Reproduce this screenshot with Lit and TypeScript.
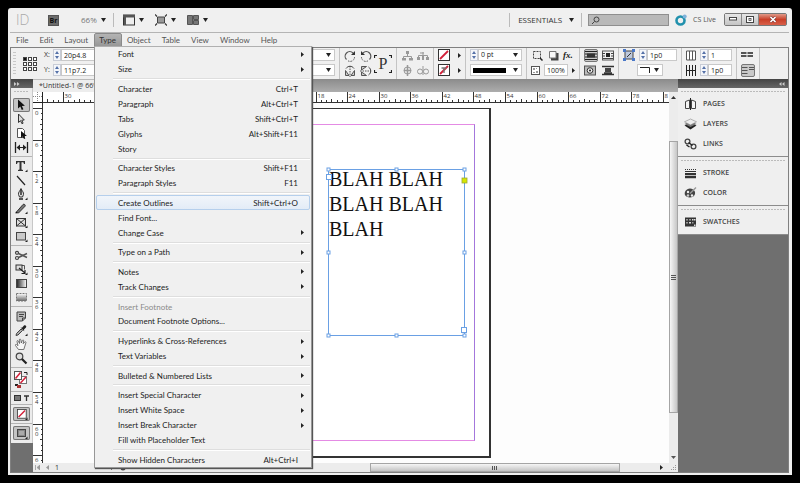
import { LitElement, html, svg, css, nothing, TemplateResult } from "lit";
import { customElement, property, state } from "lit/decorators.js";
import { classMap } from "lit/directives/class-map.js";

const icon = (w: number, h: number, body: unknown) =>
  html`<svg width=${w} height=${h} viewBox="0 0 ${w} ${h}" aria-hidden="true">${body}</svg>`;

const down = icon(5, 4, svg`<path d="M0 0h5L2.500 4z" fill="#222"/>`);
const right = icon(3, 5, svg`<path d="M0 0L3 2.500L0 5z" fill="#222"/>`);
const corner = svg`<path d="M14.500 10.500v2.500H12z" fill="#222"/>`;
const swatch = svg`<rect x=".5" y=".5" width="11" height="11" fill="#fff" stroke="#333"/><path d="M2 10L10 2" stroke="#d3203a" stroke-width="1.800"/>`;

type Entry = { label: string; key?: string; sub?: boolean; off?: boolean; hot?: boolean } | null;

const MENU: Entry[] = [
  { label: "Font", sub: true },
  { label: "Size", sub: true },
  null,
  { label: "Character", key: "Ctrl+T" },
  { label: "Paragraph", key: "Alt+Ctrl+T" },
  { label: "Tabs", key: "Shift+Ctrl+T" },
  { label: "Glyphs", key: "Alt+Shift+F11" },
  { label: "Story" },
  null,
  { label: "Character Styles", key: "Shift+F11" },
  { label: "Paragraph Styles", key: "F11" },
  null,
  { label: "Create Outlines", key: "Shift+Ctrl+O", hot: true },
  { label: "Find Font..." },
  { label: "Change Case", sub: true },
  null,
  { label: "Type on a Path", sub: true },
  null,
  { label: "Notes", sub: true },
  { label: "Track Changes", sub: true },
  null,
  { label: "Insert Footnote", off: true },
  { label: "Document Footnote Options..." },
  null,
  { label: "Hyperlinks & Cross-References", sub: true },
  { label: "Text Variables", sub: true },
  null,
  { label: "Bulleted & Numbered Lists", sub: true },
  null,
  { label: "Insert Special Character", sub: true },
  { label: "Insert White Space", sub: true },
  { label: "Insert Break Character", sub: true },
  { label: "Fill with Placeholder Text" },
  null,
  { label: "Show Hidden Characters", key: "Alt+Ctrl+I" },
];

const base = css`
  * { box-sizing: border-box; }
  button, input, select {
    font: inherit; color: inherit; margin: 0; padding: 0; border: 0;
    background: none; border-radius: 0; appearance: none; outline: 0; min-width: 0;
  }
  svg { display: block; flex: none; }
`;

@customElement("type-menu")
export class TypeMenu extends LitElement {
  static styles = [base, css`
    :host {
      display: flex; flex-direction: column; background: #f0f0f0;
      border: 1px solid #979797; border-top-color: #b0b0b0;
      box-shadow: 1px 1px 1px #555; color: #1c1c1c; box-sizing: border-box;
      font: 8px/10px Lato, "Open Sans", sans-serif;
    }
    .row {
      flex: 14 1 0px; min-height: 0; display: flex; align-items: center;
      margin: 0 1px; padding: 0 5px 0 21px; line-height: 10px; text-align: left;
      border: 1px solid transparent; border-radius: 2px;
    }
    .label { flex: 1; }
    .key { padding-right: 6px; }
    .hot { background: linear-gradient(#f1f5fa, #e3ecf7); border-color: #b5cfec; }
    .off { color: #8a8a8a; }
    .sep { flex: 5 1 0px; min-height: 0; display: flex; align-items: center; margin: 0 1px 0 18px; }
    .sep::after { content: ""; flex: 1; border-top: 1px solid #dedede; border-bottom: 1px solid #fff; }
  `];
  render() {
    return MENU.map((e) => e === null
      ? html`<div class="sep" role="separator"></div>`
      : html`<button role="menuitem" class=${classMap({ row: true, hot: !!e.hot, off: !!e.off })} ?disabled=${!!e.off}>
          <span class="label">${e.label}</span>
          ${e.key ? html`<span class="key">${e.key}</span>` : nothing}
          ${e.sub ? right : nothing}
        </button>`);
  }
}

@customElement("page-ruler")
export class PageRuler extends LitElement {
  @property({ type: Boolean }) vertical = false;
  @property({ type: Number }) origin = 0;
  @state() private extent = 0;
  private watcher = new ResizeObserver(([e]) => {
    this.extent = Math.round(this.vertical ? e.contentRect.height : e.contentRect.width);
  });
  static styles = css`
    :host { display: block; position: relative; overflow: hidden; background: #fff; min-width: 0; min-height: 0; }
    svg { display: block; position: absolute; inset: 0; }
    .num { font: 6px "Open Sans", sans-serif; fill: #333; }
    .tick { stroke: #333; }
  `;
  connectedCallback() {
    super.connectedCallback();
    this.watcher.observe(this);
  }
  disconnectedCallback() {
    this.watcher.disconnect();
    super.disconnectedCallback();
  }
  render() {
    const step = 31.56 / 6;
    const marks: TemplateResult[] = [];
    const first = Math.ceil(-this.origin / step);
    for (let i = first; this.origin + i * step < this.extent - 1; i++) {
      const p = Math.round(this.origin + i * step) + 0.5;
      const major = i % 6 === 0;
      const digits = String(Math.abs(i));
      const from = major ? 0 : i % 3 === 0 ? 7 : 8;
      if (this.vertical) {
        marks.push(svg`<line class="tick" x1=${from} x2="10" y1=${p} y2=${p}/>`);
        if (major) [...digits].forEach((d, k) => {
          const y = p + 6 + k * 5;
          if (y < this.extent) marks.push(svg`<text class="num" x="2" y=${y}>${d}</text>`);
        });
      } else {
        marks.push(svg`<line class="tick" y1=${from} y2="11" x1=${p} x2=${p}/>`);
        const shown = p + 8 < this.extent ? digits : digits[0];
        if (major) marks.push(svg`<text class="num" x=${p + 1} y="6">${shown}</text>`);
      }
    }
    const e = this.extent;
    return this.vertical
      ? html`<svg width="10" height=${e}>${marks}${svg`<line class="tick" x1="9.500" x2="9.500" y1="0" y2=${e}/>`}</svg>`
      : html`<svg width=${e} height="11">${marks}${svg`<line class="tick" y1="10.500" y2="10.500" x1="0" x2=${e}/>`}</svg>`;
  }
}

const tools: { name: string; art: unknown; more?: boolean; on?: boolean }[][] = [
  [
    { name: "Selection", on: true, art: svg`<path d="M5 1.500v9l2.300-2 1.500 3.500 1.600-.7-1.500-3.400 3-.2z" fill="#111"/>` },
    { name: "Direct Selection", art: svg`<path d="M5.500 2v8.500l2-1.800 1.400 3 1.200-.5-1.300-3 2.500-.2z" fill="#ddd" stroke="#333"/>` },
    { name: "Page", art: svg`<path d="M4.500 2.500h5l2 2v7h-7z" fill="#fff" stroke="#555"/><path d="M8 5v7l1.700-1.500L11 13l1.300-.5-1-2.500H14z" fill="#111"/>` },
    { name: "Gap", art: svg`<path d="M2.500 2v11M14.500 2v11" stroke="#222" stroke-width="1.300"/><path d="M4 7.500h9" stroke="#222"/><path d="M7 4.500L3.500 7.500L7 10.500zM10 4.500l3.500 3l-3.500 3z" fill="#222"/>` },
  ],
  [
    { name: "Type", more: true, art: svg`<path d="M3 2h9v3h-1l-.7-1.700H8.500v7.200l1.500.5v1H5v-1l1.500-.5V3.300H4.700L4 5H3z" fill="#333"/>` },
    { name: "Line", art: svg`<path d="M4 3L12 12" stroke="#222" stroke-width="1.200"/>` },
    { name: "Pen", more: true, art: svg`<path d="M8 1.500C9 4 11 5.500 10.500 7.500L9.500 10h-3L5.500 7.500C5 5.500 7 4 8 1.500z" fill="#ddd" stroke="#333"/><path d="M8 3v5M6 12h4" stroke="#222" stroke-width="1.400"/>` },
    { name: "Pencil", more: true, art: svg`<path d="M3 11.500L10 3.500c1-1 3 .5 2 1.800L5.500 12z" fill="#777" stroke="#333"/><path d="M3 10.500l-.5 2 2-.4z" fill="#111"/>` },
    { name: "Rectangle Frame", more: true, art: svg`<rect x="3.500" y="3.500" width="9" height="7.500" fill="#ddd" stroke="#333"/><path d="M3.500 3.500l9 7.500M12.500 3.500l-9 7.500" stroke="#333"/>` },
    { name: "Rectangle", more: true, art: svg`<rect x="3.500" y="3.500" width="9" height="7.500" fill="#c9c9c9" stroke="#444"/>` },
  ],
  [
    { name: "Scissors", art: svg`<path d="M5.500 5.500L14 9.500M5.500 9.500L14 5.500" stroke="#555" stroke-width="1.500"/><circle cx="4" cy="4.800" r="1.500" fill="none" stroke="#444" stroke-width="1.200"/><circle cx="4" cy="10" r="1.500" fill="none" stroke="#444" stroke-width="1.200"/>` },
    { name: "Free Transform", more: true, art: svg`<path d="M3.500 3.500h8v4" fill="none" stroke="#555"/><rect x="3" y="3" width="6" height="5" fill="#ddd" stroke="#333"/><path d="M6 6l6 5M12 8v3.500H8.500" fill="none" stroke="#222" stroke-width="1.200"/>` },
    { name: "Gradient", art: svg`<defs><linearGradient id="g"><stop stop-color="#222"/><stop offset="1" stop-color="#fff"/></linearGradient></defs><rect x="3.500" y="3.500" width="10" height="8" fill="url(#g)" stroke="#444"/>` },
    { name: "Gradient Feather", art: svg`<defs><linearGradient id="f" x2="0" y2="1"><stop stop-color="#fff"/><stop offset="1" stop-color="#666"/></linearGradient></defs><rect x="3.500" y="3.500" width="10" height="7.500" fill="url(#f)" stroke="#777" stroke-dasharray="2 1"/>` },
  ],
  [
    { name: "Note", art: svg`<path d="M4 3h8.500v6L9.500 12H4z" fill="#bbb" stroke="#444"/><path d="M6 5.500h5M6 7.500h4M9.500 12V9h3" stroke="#444" fill="none"/>` },
    { name: "Eyedropper", more: true, art: svg`<path d="M3 12.500l.5-2 4.500-4.500 1.500 1.500L5 12z" fill="#aaa" stroke="#444"/><path d="M7.500 4.500l1.500.3L11 2.500c1.300-1 3 .5 2 2L11 6.500l.2 1.700z" fill="#222"/>` },
    { name: "Hand", art: svg`<path d="M5.500 12.500L2.500 8.500c-.6-1 .8-1.500 1.500-.7l1 .9L4 4.500c-.2-1 1-1.200 1.400-.3L6.500 6.500 6.300 3c0-1.200 1.400-1.200 1.600 0l.4 3L9.300 3.500c.4-1 1.600-.6 1.400.4l-.5 2.800L11.700 5c.7-.8 1.600 0 1.200.8L10.800 12.500z" fill="#f6f6f6" stroke="#555" stroke-width=".8"/>` },
    { name: "Zoom", art: svg`<circle cx="6.500" cy="5.500" r="3.300" fill="#ddd" stroke="#444" stroke-width="1.200"/><path d="M9 8l4.500 4.500" stroke="#222" stroke-width="2.200"/>` },
  ],
];

const art = {
  rotateCw: icon(12, 12, svg`<path d="M2.500 9.500A4.300 4.300 0 0 1 9 3" fill="none" stroke="#555" stroke-width="1.200" /><path d="M11 1v4H7z" fill="#333"/><path d="M4 10.800a4.300 4.300 0 0 0 6.500-4" fill="none" stroke="#555" stroke-dasharray="1.500 1"/>`),
  rotateCcw: icon(12, 12, svg`<path d="M9.500 9.500A4.300 4.300 0 0 0 3 3" fill="none" stroke="#555" stroke-width="1.200"/><path d="M1 1v4h4z" fill="#333"/><path d="M8 10.800a4.300 4.300 0 0 1-6.500-4" fill="none" stroke="#555" stroke-dasharray="1.500 1"/>`),
  flipH: icon(12, 12, svg`<path d="M1.500 10.500v-5L5 10.500zM10.500 10.500v-5L7 10.500z" fill="#ccc" stroke="#555"/><path d="M6 1v11" stroke="#555" stroke-dasharray="1.500 1"/><path d="M2 3.500C4 .5 8 .5 10 3.500" fill="none" stroke="#444"/>`),
  flipV: icon(12, 12, svg`<path d="M1.500 1.500h5L1.500 5zM1.500 10.500h5L1.500 7z" fill="#ccc" stroke="#555"/><path d="M0 6h11" stroke="#555" stroke-dasharray="1.500 1"/><path d="M8.500 2C11.500 4 11.500 8 8.500 10" fill="none" stroke="#444"/>`),
  treeA: icon(11, 11, svg`<path d="M5.500 1v5M1.500 9V6.500h8V9" fill="none" stroke="#999"/><path d="M4 1h3v3H4zM0 8h4v2.500H0zM7 8h4v2.500H7z" fill="#999"/>`),
  treeB: icon(12, 11, svg`<path d="M1.500 9V5.500h9V9M6 2v4" fill="none" stroke="#999"/><path d="M0 7h3v3H0zM5 6h2v4H5zM9 7h3v3H9z" fill="#999"/><path d="M3 3h4" stroke="#999"/>`),
  treeC: icon(11, 11, svg`<circle cx="5.500" cy="5.500" r="3.500" fill="none" stroke="#999"/><path d="M5.500 0v11M2 5.500h7" stroke="#999" stroke-width="1.500"/>`),
  treeD: icon(12, 11, svg`<circle cx="3" cy="6.500" r="2.500" fill="none" stroke="#999"/><circle cx="9" cy="6.500" r="2.500" fill="none" stroke="#999"/><path d="M6 1v9" stroke="#999"/>`),
  none: icon(12, 12, swatch),
  noneText: icon(12, 12, svg`${swatch}<path d="M3.500 4h5M6 4v5" stroke="#777" stroke-width="1.400"/>`),
  opacity: icon(11, 11, svg`<rect x="1.500" y="1.500" width="7" height="7" fill="#eee" stroke="#444" stroke-dasharray="2 1"/><path d="M8 8l2.500 2.500" stroke="#222" stroke-width="1.500"/>`),
  shadow: icon(11, 11, svg`<path d="M3 3h7.500v7.500H3z" fill="#444"/><path d="M1.500 1.500h6.500v6.500H1.500z" fill="#f8f8f8" stroke="#777"/>`),
  checker: icon(9, 9, svg`<rect x=".5" y=".5" width="8" height="8" fill="#fff" stroke="#555"/><path d="M2 2h2v2H2zM5 5h2v2H5zM5 2h1v1H5zM2 6h2v1H2z" fill="#999"/>`),
  wrapNone: icon(12, 11, svg`<path d="M0 1.500h12M0 9.500h12M0 4h12M0 7h12" stroke="#222"/><path d="M2 3.500h8v4H2z" fill="#333"/>`),
  wrapBox: icon(12, 11, svg`<rect x=".5" y="1" width="11" height="9" fill="none" stroke="#555"/><path d="M0 3.500h3M9 3.500h3M0 6h3M9 6h3M1 8.500h10" stroke="#444"/><path d="M4 3h4v4H4z" fill="#222"/>`),
  wrapShape: icon(12, 11, svg`<rect x=".5" y="1" width="11" height="9" fill="#bbb" stroke="#555"/><circle cx="6" cy="5.500" r="2.800" fill="#eee" stroke="#333"/><circle cx="6" cy="5.500" r="1" fill="#222"/>`),
  wrapJump: icon(12, 11, svg`<path d="M0 1.500h12M0 9.500h12M2 8h8" stroke="#333" stroke-width="1.400"/><path d="M3 3h6v4H3z" fill="#444"/>`),
  fit: icon(12, 12, svg`<path d="M2 2h8v8H2z" fill="#bcc8dd" stroke="#444"/><path d="M0 0h3v3H0zM9 0h3v3H9zM0 9h3v3H0zM9 9h3v3H9z" fill="#4a78c8"/><path d="M4 8l4-4" stroke="#333"/>`),
  cols: icon(10, 11, svg`<path d="M.5 1h9v9h-9zM3.500 1v9M6.500 1v9" fill="#fff" stroke="#555"/>`),
  gutter: icon(10, 11, svg`<path d="M.5 0v11M3.500 0v11M6.500 0v11M9.500 0v11M0 5.500h10" stroke="#222"/>`),
  spanA: icon(12, 9, svg`<path d="M0 2h5.500M0 5h5.500M6.500 2H12M6.500 5H12" stroke="#555" stroke-width="2"/>`),
  spanB: icon(12, 9, svg`<path d="M0 1.500h5.500M0 4.500h5.500M0 7.500h5.500M7 1.500H12M7 3.500H12" stroke="#555"/>`),
  spin: icon(4, 8, svg`<path d="M0 3l2-3 2 3zM0 5h4L2 8z" fill="#5571a8"/>`),
};

@customElement("app-root")
export class AppRoot extends LitElement {
  static styles = [base, css`
    :host {
      display: flex; min-height: 100vh; padding: 8px; background: #000;
      font: 7px/10px "Open Sans", "Noto Sans", sans-serif; color: #333; box-sizing: border-box;
    }
    .window {
      position: relative; flex: 1; min-width: 0; display: flex; flex-direction: column;
      background: #f0f0f0; padding: 0 3px 2px 2px; border-radius: 3px 3px 0 0;
    }
    .title { height: 25px; display: flex; align-items: center; border-bottom: 1px solid #b4b4b4; padding: 0 2px 0 6px; }
    .logo { width: 32px; font: 300 14px/16px "Open Sans", sans-serif; color: #aaa; }
    .br { width: 11px; height: 11px; background: #6b6b6b; border: 1px solid #555; color: #111; font-weight: 700; line-height: 9px; text-align: center; }
    .drop { display: flex; align-items: center; gap: 4px; }
    .zoom { margin-left: 22px; font-size: 8px; color: #777; }
    .rule { width: 1px; height: 14px; background: #bbb; }
    .views { display: flex; gap: 11px; margin-left: 9px; flex: 1; }
    .zoom + .rule { margin-left: 7px; }
    .space { margin: 0 7px 0 8px; gap: 7px; font-size: 8px; }
    .search { display: flex; align-items: center; width: 81px; height: 12px; margin: 0 6px; padding-left: 2px; background: #b9b9b9; border: 1px solid #8f8f8f; }
    .search input { flex: 1; }
    .live { display: flex; align-items: center; gap: 6px; color: #555; margin-right: 8px; }
    .caption { display: flex; height: 13px; border: 1px solid #777; border-radius: 2px; margin-bottom: 2px; }
    .caption button { width: 17px; display: grid; place-items: center; background: linear-gradient(#e6e6e6, #c4c4c4); border-right: 1px solid #888; }
    .caption .close { width: 27px; border: 0; background: linear-gradient(#e09a88, #c93f28 50%, #d8604a); }

    .menubar { display: flex; height: 14px; padding-left: 1px; font: 8px/12px Lato, "Open Sans", sans-serif; }
    .menubar button { padding: 0 6px 0 5px; color: #555; }
    .menubar .open { padding: 0 5px 0 4px; background: linear-gradient(#b4b4b4, #979797); border: 1px solid #8a8a8a; border-radius: 2px 2px 0 0; color: #333; }

    .work { flex: 1; display: flex; flex-direction: column; border: 1px solid #808080; min-height: 0; }
    .control { display: flex; height: 31px; background: #f0f0f0; overflow: hidden; }
    .grip { width: 3px; margin: 4px 7px 4px 2px; background: repeating-linear-gradient(#c8c8c8 0 1px, transparent 1px 3px); }
    .proxy { align-self: center; margin-right: 7px; }
    .group { display: flex; flex-direction: column; gap: 1px; flex: none; padding: 0 4px; border-right: 1px solid #c4c4c4; margin: 0; }
    .line { display: flex; align-items: center; height: 14px; gap: 4px; }
    .spread { justify-content: space-between; }
    .field { display: flex; align-items: center; height: 12px; }
    .field label { width: 9px; }
    .spin { width: 8px; height: 12px; display: grid; place-items: center; border: 1px solid #c8ccd6; background: #f4f6fa; }
    .field input, .combo, .plain { height: 12px; background: #fff; border: 1px solid #c9c9c9; padding-left: 2px; color: #222; }
    .combo { display: flex; align-items: center; padding-right: 3px; }
    .combo select { flex: 1; height: 10px; width: 100%; }
    .w24 { width: 24px; } .w26 { width: 26px; } .w30 { width: 30px; } .w44 { width: 44px; } .w52 { width: 52px; }
    .hidden-fields { width: 227px; align-items: flex-end; }
    .stroke-bar { flex: 1; height: 5px; background: #000; }
    .tall { flex-direction: row; align-items: center; gap: 2px; }
    .stack { display: flex; flex-direction: column; gap: 1px; }
    .glyph { display: grid; place-items: center; width: 18px; height: 20px; position: relative; font: 16px/18px "Liberation Serif", serif; }
    .glyph svg { position: absolute; inset: 0; }
    .fx { font: italic 700 9px/12px "Liberation Serif", serif; color: #222; }
    .pressed { border: 1px solid #777; border-radius: 2px; background: #c9c9c9; }
    .ib { display: grid; place-items: center; height: 13px; min-width: 12px; }

    .main { flex: 1; display: flex; min-height: 0; background: #6f6f6f; }
    .cap { height: 9px; flex: none; display: flex; align-items: center; background: linear-gradient(#444, #666); padding: 0 3px; }
    .tools { width: 22px; display: flex; flex-direction: column; flex: none; }
    .toolset { background: #ececec; border-right: 1px solid #c8c8c8; padding: 3px 0; display: flex; flex-direction: column; align-items: center; }
    .dots { height: 1px; align-self: stretch; margin: 0 3px 6px; background: repeating-linear-gradient(90deg, #bbb 0 2px, transparent 2px 3px); }
    .tool { width: 17px; height: 14px; }
    .on { background: #c4c4c4; box-shadow: inset 0 0 0 1px #777; border-radius: 2px; }
    .bar { height: 1px; align-self: stretch; background: #b5b5b5; margin: 2px 0; }
    .modes { display: flex; gap: 3px; height: 8px; align-items: center; }

    .doc { flex: 1; min-width: 0; display: flex; flex-direction: column; }
    .tabs { height: 13px; display: flex; background: linear-gradient(#8b8b8b, #adadad); }
    .tab { width: 200px; padding: 0 6px; background: #ededed; line-height: 12px; text-align: left; white-space: nowrap; border-top: 1px solid #bbb; }
    .sheet { flex: 1; min-height: 0; display: grid; grid-template: 11px 1fr / 10px 1fr 9px; }
    .origin { background: #fff; }
    .vscroll { grid-row: 1 / 3; grid-column: 3; display: flex; flex-direction: column; align-items: center; background: #ececec; padding: 4px 0; }
    .vthumb { margin: 42px 0 43px; flex: 1; align-self: stretch; display: grid; place-items: center; border: 1px solid #a5a5a5; background: linear-gradient(90deg, #f6f6f6, #c6c6c6); }
    .canvas { position: relative; overflow: hidden; background: #fdfdfd; }
    .page { position: absolute; left: 179px; top: 5px; width: 269px; height: 350px; border: 1px solid #333; border-width: 1px 2px 2px 1px; background: #fff; }
    .margins { position: absolute; inset: 15px 14px 15px 15px; border: 1px solid #e48be4; border-left-color: #a477dc; border-right-color: #a477dc; }
    .frame { position: absolute; left: 283px; top: 64px; width: 142px; height: 172px; padding: 0 3px; font: 20px/25px "Liberation Serif", serif; color: #111; }
    .frame svg { position: absolute; inset: 0; }
    .frame p { margin: 0; }

    .status { height: 9px; display: flex; align-items: center; background: #ececec; padding-left: 2px; }
    .pager { display: flex; align-items: center; gap: 6px; flex: 1; line-height: 9px; }
    .pager span { width: 50px; }
    .hthumb { width: 250px; height: 9px; display: grid; place-items: center; border: 1px solid #a5a5a5; background: linear-gradient(#f6f6f6, #c4c4c4); margin-right: 40px; }
    .status > svg:last-child { margin: 0 2px 0 8px; }

    .panels { width: 110px; flex: none; }
    .panels .cap { justify-content: flex-end; }
    .panel { background: #efefef; padding: 3px 0 2px; border-bottom: 1px solid #8c8c8c; display: flex; flex-direction: column; }
    .panel .dots { margin-bottom: 2px; }
    .panel button { display: flex; align-items: center; gap: 6px; height: 20px; padding-left: 6px; font-weight: 600; color: #444; }

    type-menu { position: absolute; left: 86px; top: 38px; bottom: 7px; width: 218px; }
  `];

  private spin() { return html`<span class="spin">${art.spin}</span>`; }

  private num(id: string, value: string, cls: string, label = "") {
    return html`<span class="field">${label ? html`<label for=${id}>${label}</label>` : nothing}${this.spin()}<input id=${id} class=${cls} .value=${value} aria-label=${id}></span>`;
  }

  private ib(name: string, body: unknown, pressed = false) {
    return html`<button class=${classMap({ ib: true, pressed })} aria-label=${name}>${body}</button>`;
  }

  private combo(name: string, value: string, cls: string) {
    return html`<span class="combo ${cls}"><select aria-label=${name}><option>${value}</option></select>${down}</span>`;
  }

  private control() {
    return html`<div class="control">
      <span class="grip"></span>
      <svg class="proxy" width="14" height="14" viewBox="0 0 14 14">
        ${[0, 5, 10].map((y) => [0, 5, 10].map((x) => svg`<rect x=${x + 0.5} y=${y + 0.5} width="3" height="3" fill=${x + y ? "#fff" : "#111"} stroke="#444"/>`))}
      </svg>
      <div class="stack">
        <div class="line">${this.num("x-position", "20p4.8", "w52", "X:")}</div>
        <div class="line">${this.num("y-position", "11p7.2", "w52", "Y:")}</div>
      </div>
      <div class="group hidden-fields">
        <div class="line">${this.combo("Scale X", "", "w52")}</div>
        <div class="line">${this.combo("Scale Y", "", "w52")}</div>
      </div>
      <div class="group tall">
        <div class="stack">
          <div class="line">${this.ib("Rotate clockwise", art.rotateCw)}${this.ib("Rotate counter-clockwise", art.rotateCcw)}</div>
          <div class="line">${this.ib("Flip horizontal", art.flipH)}${this.ib("Flip vertical", art.flipV)}</div>
        </div>
        <span class="glyph">P<svg width="18" height="20" viewBox="0 0 18 20"><path d="M.5 4V1.500H3M15 1.500h2.500V4M.5 16v2.500H3M15 18.500h2.500V16" fill="none" stroke="#222" stroke-width="1.200"/></svg></span>
      </div>
      <div class="group">
        <div class="line">${this.ib("Select container", art.treeA)}${this.ib("Select previous", art.treeB)}</div>
        <div class="line">${this.ib("Select content", art.treeC)}${this.ib("Select next", art.treeD)}</div>
      </div>
      <div class="group">
        <div class="line">${this.ib("Fill", art.none)}<span></span>${right}</div>
        <div class="line">${this.ib("Stroke", art.noneText)}<span></span>${right}</div>
      </div>
      <div class="group">
        <div class="line"><span class="field">${this.spin()}${this.combo("Stroke weight", "0 pt", "w44")}</span></div>
        <div class="line"><span class="combo w52"><span class="stroke-bar"></span><svg width="7" height="4"></svg>${down}</span></div>
      </div>
      <div class="group">
        <div class="line">${this.ib("Opacity target", art.opacity)}${this.ib("Drop shadow", art.shadow)}<button class="fx">fx.</button></div>
        <div class="line">${art.checker}<input class="plain w24" aria-label="Opacity" value="100%">${right}</div>
      </div>
      <div class="group">
        <div class="line">${this.ib("No text wrap", art.wrapNone, true)}${this.ib("Wrap around bounding box", art.wrapBox)}</div>
        <div class="line spread">${this.ib("Wrap around shape", art.wrapShape)}${this.ib("Jump object", art.wrapJump)}</div>
      </div>
      <div class="group">
        <div class="line">${art.fit}${this.num("corner-size", "1p0", "w30")}</div>
        <div class="line"><svg width="10" height="4"></svg><span class="combo w26">${icon(10, 6, svg`<path d="M0 .5h9.500V6" fill="none" stroke="#222"/>`)}<svg width="4" height="4"></svg>${down}</span></div>
      </div>
      <div class="group">
        <div class="line">${art.cols}${this.num("columns", "1", "w24")}</div>
        <div class="line">${art.gutter}${this.num("gutter", "1p0", "w24")}</div>
      </div>
      <div class="group">
        <div class="line">${this.ib("Balance columns", art.spanA)}</div>
        <div class="line">${this.ib("Unbalanced columns", art.spanB, true)}</div>
      </div>
    </div>`;
  }

  private toolbox() {
    return html`<div class="tools">
      <div class="cap">${icon(6, 4, svg`<path d="M0 0l2.500 2L0 4zM3 0l2.500 2L3 4z" fill="#ccc"/>`)}</div>
      <div class="toolset">
        <span class="dots"></span>
        ${tools.map((set) => html`${set.map((t) => html`<button class=${classMap({ tool: true, on: !!t.on })} aria-label=${t.name}>${icon(17, 14, svg`${t.art}${t.more ? corner : nothing}`)}</button>`)}<span class="bar"></span>`)}
        ${icon(17, 19, svg`<rect x="6.500" y="6.500" width="7" height="7" fill="#fff" stroke="#777"/><path d="M7.500 13l5.500-6" stroke="#d3203a" stroke-width="1.500"/><rect x="1.500" y="1.500" width="7" height="8" fill="#fff" stroke="#555"/><path d="M2.500 8.500l5-6" stroke="#d3203a" stroke-width="1.500"/><path d="M11 2.500h3V5" stroke="#222" fill="none"/><path d="M2 14h3v2H2z" fill="#222"/><path d="M4 15h4v3H4z" fill="#a33"/>`)}
        <span class="bar"></span>
        <div class="modes">${icon(7, 6, svg`<rect x=".5" y=".5" width="6" height="5" fill="#777" stroke="#333"/>`)}${icon(5, 6, svg`<path d="M0 1h5M2.500 1v5" stroke="#333" stroke-width="1.300"/>`)}</div>
        <span class="bar"></span>
        <button class="tool on" aria-label="Apply none">${icon(17, 14, svg`<g transform="translate(4 2) scale(.8)">${swatch}</g>${corner}`)}</button>
        <span class="bar"></span>
        <button class="tool on" aria-label="Screen mode">${icon(17, 14, svg`<rect x="4.500" y="3.500" width="8" height="7" fill="#888" stroke="#444"/><path d="M6 5h5v4H6z" fill="#aaa"/>${corner}`)}</button>
      </div>
    </div>`;
  }

  private document() {
    const handle = (x: number, y: number) => svg`<rect x=${x - 1.5} y=${y - 1.5} width="3" height="3" fill="#fff" stroke="#6aa0e4"/>`;
    return html`<div class="doc">
      <div class="tabs"><button class="tab">*Untitled-1 @ 66%</button></div>
      <div class="sheet">
        <svg class="origin" width="10" height="11"><path d="M4.500 0v11M0 4.500h10" stroke="#888" stroke-dasharray="1 1"/><path d="M9.500 0v11M0 10.500h10" stroke="#222"/></svg>
        <page-ruler origin="178"></page-ruler>
        <page-ruler vertical origin="5"></page-ruler>
        <div class="canvas">
          <div class="page"><div class="margins"></div></div>
          <div class="frame">
            <p>BLAH BLAH BLAH BLAH BLAH</p>
            <svg width="142" height="172" viewBox="0 0 142 172">
              <rect x="2.500" y="2.500" width="136" height="166" fill="none" stroke="#6aa0e4"/>
              ${[2.5, 70.5, 138.5].map((x) => [2.5, 85.5, 168.5].map((y) => (x === 70.5 && y === 85.5 ? nothing : handle(x, y))))}
              <rect x=".5" y="7.500" width="5" height="5" fill="#fff" stroke="#6aa0e4"/>
              <rect x="135.500" y="160.500" width="5" height="5" fill="#fff" stroke="#6aa0e4"/>
              <rect x="136" y="11" width="5" height="5" fill="#d6e600" stroke="#9aa83a" stroke-width=".8"/>
            </svg>
          </div>
        </div>
        <div class="vscroll">
          ${icon(5, 3, svg`<path d="M0 3l2.500-3L5 3z" fill="#333"/>`)}
          <div class="vthumb">${icon(5, 5, svg`<path d="M0 .5h5M0 2.500h5M0 4.500h5" stroke="#555"/>`)}</div>
          ${icon(5, 3, svg`<path d="M0 0h5L2.500 3z" fill="#555"/>`)}
        </div>
      </div>
      <div class="status">
        <div class="pager">
          ${icon(5, 5, svg`<path d="M.5 0v5M5 0L2 2.500L5 5z" stroke="#999" fill="#999" stroke-width=".8"/>`)}
          ${icon(3, 5, svg`<path d="M3 0L0 2.500L3 5z" fill="#999"/>`)}
          <span>1</span>
          ${icon(3, 5, svg`<path d="M0 0l3 2.500L0 5z" fill="#222"/>`)}
          ${icon(6, 6, svg`<circle cx="3" cy="3" r="2.500" fill="#444"/>`)}
        </div>
        <div class="hthumb">${icon(6, 4, svg`<path d="M.5 0v4M2.500 0v4M4.500 0v4" stroke="#555"/>`)}</div>
        ${right}
        ${icon(5, 5, svg`<path d="M4 0h1v1H4zM2 2h1v1H2zM4 2h1v1H4zM0 4h1v1H0zM2 4h1v1H2zM4 4h1v1H4z" fill="#999"/>`)}
      </div>
    </div>`;
  }

  private panels() {
    const i = {
      pages: icon(13, 12, svg`<path d="M1.500 3.500L5.500 2v8.500h-4zM7.500 2L11.500 3.500v7h-4z" fill="#f4f4f4" stroke="#444"/><path d="M6.500 0v12" stroke="#222"/>`),
      layers: icon(13, 12, svg`<path d="M.5 7.500L6.500 11.500L12.500 7.500L6.500 5z" fill="#222"/><path d="M.5 6L6.500 9L12.500 6L6.500 3z" fill="#777"/><path d="M.5 3.800L6.500 7L12.500 3.800L6.500 1z" fill="#eee" stroke="#888" stroke-width=".6"/>`),
      links: icon(13, 12, svg`<circle cx="3.500" cy="3.500" r="2.400" fill="none" stroke="#444" stroke-width="1.300"/><circle cx="9.500" cy="8.500" r="2.400" fill="none" stroke="#444" stroke-width="1.300"/><path d="M4.500 4.500l4 3M2.500 7l3 2" stroke="#222" stroke-width="1.400"/>`),
      stroke: icon(13, 12, svg`<path d="M1 2.500h11" stroke="#333" stroke-dasharray="1 1"/><path d="M1 4.500h11" stroke="#333"/><path d="M1 7h11" stroke="#333" stroke-width="2"/><path d="M1 10h11" stroke="#333" stroke-width="2.500"/>`),
      color: icon(13, 12, svg`<path d="M6 1.500C2 2 0 5 1 8c1.500 3.500 9 3.500 10-1 .5-2-.5-5-5-5.500z" fill="#444"/><circle cx="4" cy="5" r="1.200" fill="#eee"/><circle cx="4" cy="8.500" r="1.200" fill="#ccc"/><circle cx="8" cy="8.500" r="1.200" fill="#eee"/><path d="M6 6.500L12 .5" stroke="#999" stroke-width="1.400"/>`),
      swatches: icon(13, 12, svg`<path d="M1 1.500h11v9H1z" fill="#333"/><path d="M2 3h2v1.500H2zM5 3h2v1.500H5zM2 6h2v1.500H2zM8 6h1.500v1.500H8z" fill="#999"/><path d="M8 3h1.500v1.500H8zM10 3h1.500v1.500H10zM5 6h2v1.500H5zM10 8.500h1.500V10H10z" fill="#ddd"/>`),
    };
    const groups: [string, unknown][][] = [
      [["PAGES", i.pages], ["LAYERS", i.layers], ["LINKS", i.links]],
      [["STROKE", i.stroke], ["COLOR", i.color]],
      [["SWATCHES", i.swatches]],
    ];
    return html`<div class="panels">
      <div class="cap">${icon(6, 4, svg`<path d="M2.500 0L0 2l2.500 2zM5.500 0L3 2l2.500 2z" fill="#ccc"/>`)}</div>
      ${groups.map((g) => html`<div class="panel"><span class="dots"></span>${g.map(([n, a]) => html`<button>${a}${n}</button>`)}</div>`)}
    </div>`;
  }

  render() {
    const layout = icon(12, 12, svg`<rect x=".5" y="1" width="11" height="10" fill="#eee" stroke="#333"/><path d="M0 1h12v2.500H0zM1 3h2v8H1z" fill="#555"/>`);
    const screen = icon(12, 12, svg`<path d="M2.500 3h7v6h-7z" fill="#999" stroke="#444"/><path d="M0 .5l2 2M12 .5l-2 2M0 11.500l2-2M12 11.500l-2-2" stroke="#333" stroke-width="1.200"/>`);
    const arrange = icon(12, 12, svg`<path d="M.5 1.500h5v9h-5zM6.500 1.500h5v4h-5zM6.500 6.500h5v4h-5z" fill="#777" stroke="#555"/>`);
    return html`<div class="window">
      <header class="title">
        <span class="logo">ID</span>
        <button class="br">Br</button>
        <button class="drop zoom">66% ${down}</button>
        <span class="rule"></span>
        <div class="views">
          ${[["View options", layout], ["Screen mode", screen], ["Arrange documents", arrange]].map(([n, a]) => html`<button class="drop" aria-label=${n as string}>${a}${down}</button>`)}
        </div>
        <span class="rule"></span>
        <button class="drop space">ESSENTIALS ${down}</button>
        <span class="rule"></span>
        <label class="search">${icon(9, 9, svg`<circle cx="5.500" cy="3.500" r="2.500" fill="none" stroke="#444"/><path d="M3.500 5.500L1 8" stroke="#444"/>`)}<input aria-label="Search"></label>
        <button class="live">${icon(12, 12, svg`<circle cx="5.500" cy="6.500" r="4" fill="none" stroke="#2191ad" stroke-width="2.600"/><circle cx="9.700" cy="2.500" r="2" fill="#7fb2da"/>`)}CS Live</button>
        <div class="caption">
          <button aria-label="Minimize">${icon(8, 4, svg`<rect x=".5" y=".5" width="7" height="2.500" fill="#fff" stroke="#444"/>`)}</button>
          <button aria-label="Maximize">${icon(8, 7, svg`<rect x=".5" y=".5" width="7" height="6" fill="#fff" stroke="#444"/><rect x="3" y="2.500" width="2" height="2" fill="#fff" stroke="#444" stroke-width=".8"/>`)}</button>
          <button class="close" aria-label="Close">${icon(8, 7, svg`<path d="M1.500 1l5 5M6.500 1l-5 5" stroke="#733" stroke-width="2.800"/><path d="M1.500 1l5 5M6.500 1l-5 5" stroke="#fff" stroke-width="1.700"/>`)}</button>
        </div>
      </header>
      <nav class="menubar">
        ${["File", "Edit", "Layout", "Type", "Object", "Table", "View", "Window", "Help"].map((m) => html`<button class=${classMap({ open: m === "Type" })}>${m}</button>`)}
      </nav>
      <div class="work">
        ${this.control()}
        <div class="main">${this.toolbox()}${this.document()}${this.panels()}</div>
      </div>
      <type-menu role="menu"></type-menu>
    </div>`;
  }
}
